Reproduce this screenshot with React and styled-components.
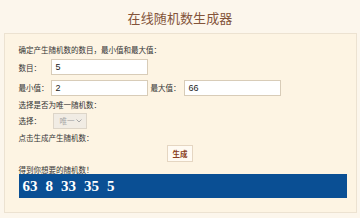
import React from 'react';
import styled, { createGlobalStyle } from 'styled-components';

const GlobalStyle = createGlobalStyle`
  html, body {
    margin: 0;
    padding: 0;
    background: #fcf6ec;
  }
  body {
    font-family: 'Noto Sans CJK SC', 'Noto Sans', sans-serif;
    width: 360px;
    height: 218px;
    overflow: hidden;
  }
`;

const Page = styled.div`
  width: 360px;
  height: 218px;
  display: flex;
  flex-direction: column;
  align-items: center;
`;

const Title = styled.h1`
  margin: 0;
  height: 33px;
  line-height: 35px;
  font-size: 13px;
  font-weight: 400;
  color: #83543a;
  letter-spacing: 0.1px;
`;

const Panel = styled.div`
  width: 353px;
  height: 180px;
  box-sizing: border-box;
  background: #fdf4e3;
  border: 1px solid #ece2d1;
  padding: 6px 10px 0 10px;
  display: flex;
  flex-direction: column;
`;

const Line = styled.div`
  font-size: 7.5px;
  color: #333;
  height: ${(p) => p.$h || 16}px;
  display: flex;
  align-items: center;
  justify-content: ${(p) => (p.$center ? 'center' : 'flex-start')};
`;

const Label = styled.span`
  display: inline-block;
  width: ${(p) => p.$w || 32}px;
  flex: none;
`;

const Input = styled.div`
  box-sizing: border-box;
  width: 97px;
  height: 16px;
  background: #fff;
  border: 1px solid #d8ccb8;
  font-family: 'Liberation Sans', sans-serif;
  font-size: 9px;
  color: #222;
  padding-left: 4px;
  display: flex;
  align-items: center;
  margin-right: 3px;
`;

const Select = styled.div`
  box-sizing: border-box;
  width: 34px;
  height: 16px;
  margin-left: 2px;
  background: #f1ece4;
  border: 1px solid #ddd5c8;
  color: #a7a7a7;
  font-size: 7.5px;
  display: flex;
  align-items: center;
  justify-content: space-between;
  padding: 0 4px 0 6px;
`;

const Button = styled.div`
  box-sizing: border-box;
  width: 26px;
  height: 17px;
  border: 1px solid #e5d6c2;
  background: #fffaf2;
  color: #8a3f22;
  font-size: 7.5px;
  font-weight: 700;
  display: flex;
  align-items: center;
  justify-content: center;
`;

const Result = styled.div`
  margin-top: 1px;
  width: 328px;
  height: 24px;
  box-sizing: border-box;
  background: #0a4f94;
  color: #fff;
  font-family: 'Liberation Serif', serif;
  font-weight: 700;
  font-size: 15px;
  display: flex;
  align-items: center;
  gap: 8px;
  padding-left: 4px;
  margin-left: 4px;
`;

const Body = styled.div`
  padding: 0 4px;
`;

const numbers = [63, 8, 33, 35, 5];

const App = () => (
  <>
    <GlobalStyle />
    <Page>
      <Title>在线随机数生成器</Title>
      <Panel>
        <Body>
          <Line $h={18}>确定产生随机数的数目，最小值和最大值：</Line>
          <Line $h={18}>
            <Label>数目：</Label>
            <Input>5</Input>
          </Line>
          <Line $h={23}>
            <Label>最小值：</Label>
            <Input>2</Input>
            <Label $w={33}>最大值：</Label>
            <Input>66</Input>
          </Line>
          <Line $h={10}>选择是否为唯一随机数：</Line>
          <Line $h={23}>
            <Label $w={32}>选择：</Label>
            <Select>
              <span>唯一</span>
              <svg width="6" height="4" viewBox="0 0 6 4">
                <path d="M0.5 0.5 L3 3 L5.5 0.5" stroke="#a9a9a9" fill="none" strokeWidth="1" />
              </svg>
            </Select>
          </Line>
          <Line $h={10}>点击生成产生随机数：</Line>
          <Line $h={23} $center>
            <Button>生成</Button>
          </Line>
          <Line $h={8}>得到你想要的随机数！</Line>
        </Body>
        <Result>
          {numbers.map((n, i) => (
            <span key={i}>{n}</span>
          ))}
        </Result>
      </Panel>
    </Page>
  </>
);

export default App;
